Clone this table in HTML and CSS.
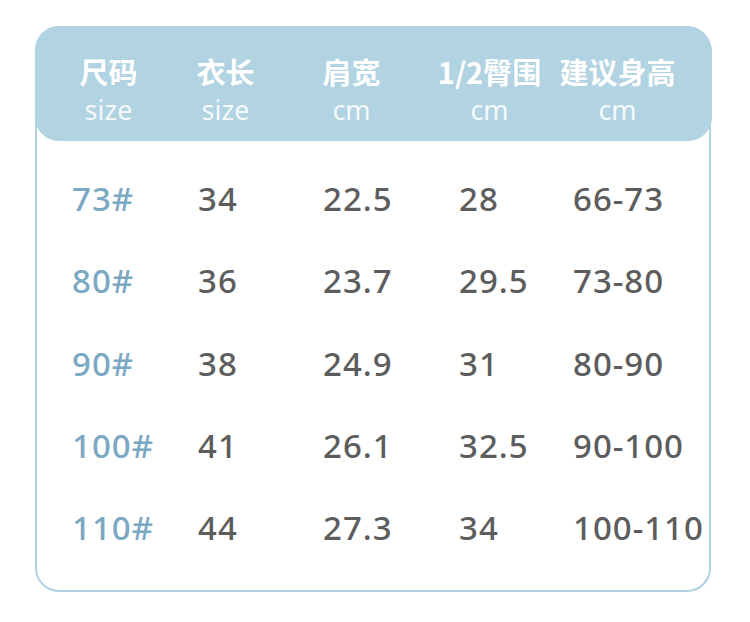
FILE: index.html
```html
<!DOCTYPE html>
<html lang="zh">
<head>
<meta charset="utf-8">
<link rel="stylesheet" href="styles.css">
</head>
<body>
<div class="card">
  <div class="head">
    <div class="hcell"><span class="zh">尺码</span><span class="en">size</span></div>
    <div class="hcell"><span class="zh">衣长</span><span class="en">size</span></div>
    <div class="hcell"><span class="zh">肩宽</span><span class="en">cm</span></div>
    <div class="hcell"><span class="zh">1/2臀围</span><span class="en">cm</span></div>
    <div class="hcell"><span class="zh">建议身高</span><span class="en">cm</span></div>
  </div>
  <div class="body">
    <div class="row"><span class="size">73#</span><span>34</span><span>22.5</span><span>28</span><span>66-73</span></div>
    <div class="row"><span class="size">80#</span><span>36</span><span>23.7</span><span>29.5</span><span>73-80</span></div>
    <div class="row"><span class="size">90#</span><span>38</span><span>24.9</span><span>31</span><span>80-90</span></div>
    <div class="row"><span class="size">100#</span><span>41</span><span>26.1</span><span>32.5</span><span>90-100</span></div>
    <div class="row"><span class="size">110#</span><span>44</span><span>27.3</span><span>34</span><span>100-110</span></div>
  </div>
</div>
</body>
</html>
```
FILE: styles.css
```css
html, body {
  margin: 0;
  padding: 0;
  background: #ffffff;
}
body {
  width: 750px;
  height: 622px;
  overflow: hidden;
  font-family: "Noto Sans", "Noto Sans CJK SC", sans-serif;
}
.card {
  box-sizing: border-box;
  margin: 26px 0 0 35px;
  width: 676px;
  height: 566px;
  border: 2.5px solid #aed2e2;
  border-radius: 24px;
}
.head {
  margin: -2.5px -2.5px 0 -2.5px;
  height: 115px;
  background: #b1d3e2;
  border-radius: 26px 26px 24px 24px;
  display: grid;
  grid-template-columns: 108px 126px 126px 150px 106px;
  padding-left: 20px;
  align-content: start;
  padding-top: 26px;
  box-sizing: border-box;
}
.hcell {
  display: flex;
  flex-direction: column;
  align-items: center;
  color: #ffffff;
}
.zh {
  font-family: "Noto Sans CJK SC", "Noto Sans", sans-serif;
  font-weight: 700;
  font-size: 29px;
  line-height: 38px;
  white-space: nowrap;
}
.en {
  font-size: 27px;
  line-height: 36px;
  font-weight: 400;
  color: #f4f9fb;
  margin-top: 2px;
}
.body {
  padding: 17px 0 0 35px;
}
.row {
  display: grid;
  grid-template-columns: 126px 125px 136px 114px 1fr;
  height: 82.3px;
  align-items: center;
  font-size: 33px;
  font-weight: 500;
  letter-spacing: 1px;
  color: #5d5d5d;
  white-space: nowrap;
}
.row .size {
  color: #7ba8c2;
}
```
